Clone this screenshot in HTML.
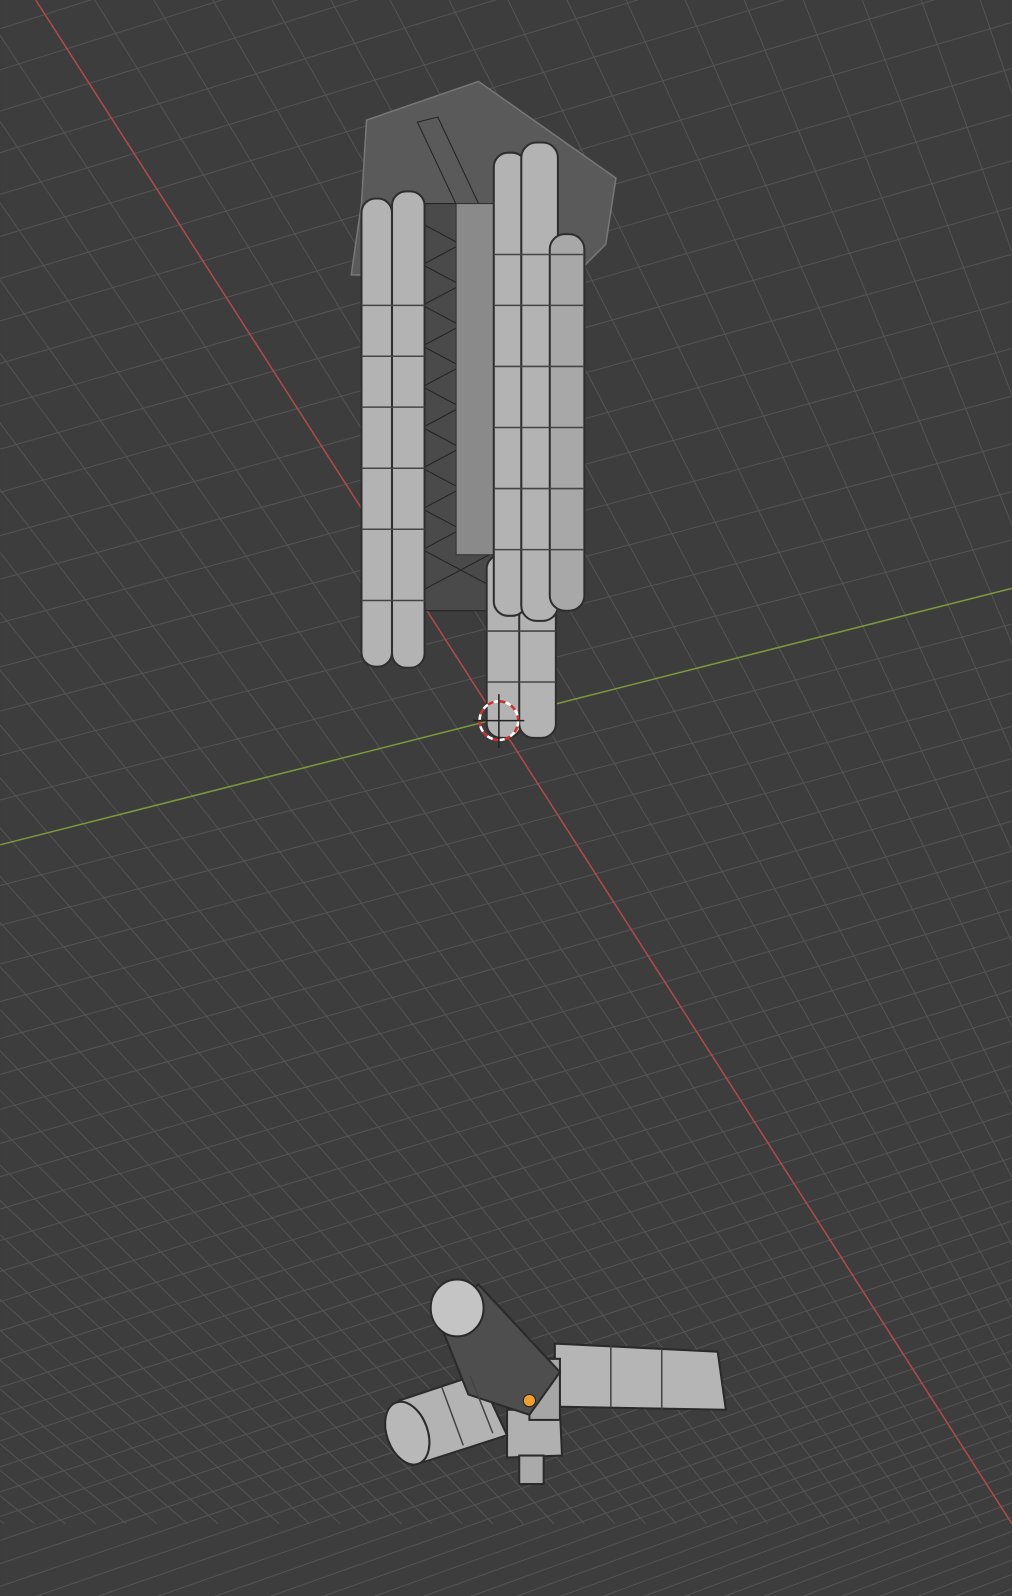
<!DOCTYPE html>
<html><head><style>
html,body{margin:0;padding:0;background:#3d3d3d;width:1012px;height:1596px;overflow:hidden}
svg{display:block}
</style></head><body>
<svg id="s" width="1012" height="1596" viewBox="0 0 994 1568" xmlns="http://www.w3.org/2000/svg">
<rect width="994" height="1568" fill="#3d3d3d"/>
<g id="grid" stroke="#545454" stroke-width="1"></g>
<line x1="35" y1="0" x2="994" y2="1497" stroke="#b04a4a" stroke-width="1.5"/>
<line x1="0" y1="830" x2="994" y2="578" stroke="#7a9a3a" stroke-width="1.5"/>
<polygon points="360,118 470,80 605,175 595,240 560,275 345,270 355,200" fill="#5a5a5a" stroke="#777" stroke-width="1.5"/>
<g stroke="#222" stroke-width="1" fill="none">
<rect x="415" y="200" width="75" height="400" fill="#4a4a4a"/>
<path d="M415,220 L490,260 M490,220 L415,260 M415,260 L490,300 M490,260 L415,300 M415,300 L490,340 M490,300 L415,340 M415,340 L490,380 M490,340 L415,380 M415,380 L490,420 M490,380 L415,420 M415,420 L490,460 M490,420 L415,460 M415,460 L490,500 M490,460 L415,500 M415,500 L490,540 M490,500 L415,540 M415,540 L490,580 M490,540 L415,580"/>
<path d="M410,120 L430,115 L470,200 L450,205 Z"/>
</g>
<rect x="448" y="200" width="40" height="345" fill="#8a8a8a" stroke="#333"/>
<g fill="#b3b3b3" stroke="#2e2e2e" stroke-width="2">
<rect x="355" y="195" width="30" height="460" rx="14"/>
<rect x="385" y="188" width="32" height="468" rx="14"/>
<rect x="478" y="545" width="34" height="180" rx="14"/>
<rect x="510" y="560" width="36" height="165" rx="14"/>
<rect x="485" y="150" width="32" height="455" rx="14"/>
<rect x="512" y="140" width="36" height="470" rx="15"/>
<rect x="540" y="230" width="34" height="370" rx="15" fill="#a8a8a8"/>
</g>
<g stroke="#444" stroke-width="1.5">
<path d="M355,300H417M355,350H417M355,400H417M355,460H417M355,520H417M355,590H417M485,250H574M485,300H574M485,360H574M485,420H574M485,480H574M485,540H574M478,620H546M478,670H546"/>
</g>
<circle cx="490" cy="708" r="19" fill="none" stroke="#fff" stroke-width="2.5" stroke-dasharray="6,6"/>
<circle cx="490" cy="708" r="19" fill="none" stroke="#c33" stroke-width="2.5" stroke-dasharray="6,6" stroke-dashoffset="6"/>
<line x1="490" y1="682" x2="490" y2="735" stroke="#222" stroke-width="1.5"/>
<line x1="465" y1="708" x2="515" y2="708" stroke="#222" stroke-width="1.5"/>
<g stroke="#2a2a2a" stroke-width="2">
<polygon points="545,1320 705,1328 713,1385 545,1382" fill="#b5b5b5"/>
<polygon points="498,1385 550,1385 552,1430 498,1432" fill="#b0b0b0"/>
<rect x="510" y="1430" width="24" height="28" fill="#aaa"/>
<polygon points="392,1376 470,1350 498,1410 405,1440" fill="#b3b3b3"/>
<ellipse cx="400" cy="1408" rx="20" ry="32" fill="#b8b8b8" transform="rotate(-20 400 1408)"/>
<rect x="520" y="1335" width="30" height="60" fill="#a6a6a6"/>
<polygon points="430,1295 470,1262 550,1348 520,1390 460,1370" fill="#4e4e4e"/>
<ellipse cx="449" cy="1285" rx="26" ry="28" fill="#c4c4c4"/>
</g>
<path d="M600,1322V1382M650,1325V1384M434,1363L455,1420M462,1352L484,1408" stroke="#444" stroke-width="1.5"/>
<circle cx="520" cy="1376" r="6" fill="#f0a030" stroke="#222"/>
</svg>
<script>
var g=document.getElementById('grid'),ns='http://www.w3.org/2000/svg';
function L(x1,y1,x2,y2){var l=document.createElementNS(ns,'line');l.setAttribute('x1',x1);l.setAttribute('y1',y1);l.setAttribute('x2',x2);l.setAttribute('y2',y2);g.appendChild(l);}
for(var i=-60;i<=60;i++){L(35+i*58,0,994+i*30,1497);}
var y=830;for(var k=0;k<30;k++){y-=Math.max(26,44-k*0.2);L(0,y,994,y-252+(y-830)*0.08);}
y=830;var sp=40;for(var k=0;k<80;k++){y+=sp;sp=Math.max(16,sp*0.975);L(0,y,994,y-252-(y-830)*0.12);}
</script>
</body></html>
